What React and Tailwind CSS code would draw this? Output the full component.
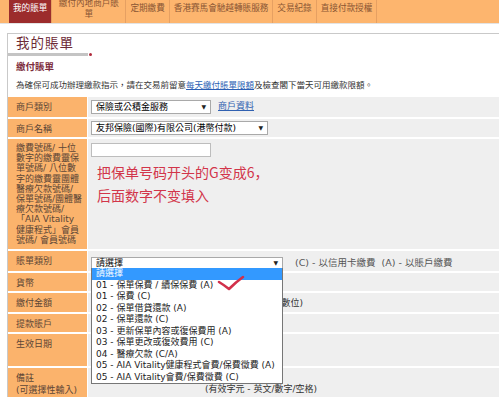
import React from 'react';

const TABS = [
  { label: '我的賬單', active: true },
  { label: '繳付內地商戶賬單', wrap: true },
  { label: '定期繳費' },
  { label: '香港賽馬會馳越轉賬服務' },
  { label: '交易紀錄' },
  { label: '直接付款授權' },
];

const BILL_TYPES = [
  '請選擇',
  '01 - 保單保費 / 續保保費 (A)',
  '01 - 保費 (C)',
  '02 - 保單借貸還款 (A)',
  '02 - 保單還款 (C)',
  '03 - 更新保單內容或復保費用 (A)',
  '03 - 保單更改或復效費用 (C)',
  '04 - 醫療欠款 (C/A)',
  '05 - AIA Vitality健康程式會費/保費徵費 (A)',
  '05 - AIA Vitality會費/保費徵費 (C)',
];

const LONG_LABEL = [
  '繳費號碼/ 十位',
  '數字的繳費靈保',
  '單號碼/ 八位數',
  '字的繳費靈團體',
  '醫療欠款號碼/',
  '保單號碼/團體醫',
  '療欠款號碼/',
  '「AIA Vitality',
  '健康程式」會員',
  '號碼/ 會員號碼',
];

const Select = ({ value, className }) => (
  <div className={`flex items-center justify-between bg-white border border-[#a9a9a9] pl-[4px] pr-[4px] leading-[12px] ${className}`}>
    <span className="whitespace-nowrap">{value}</span>
    <span className="text-[6px] text-[#222]">▼</span>
  </div>
);

// one row of the form: orange label on the left, grey field on the right
const Row = ({ label, h, children, labelClass = '' }) => (
  <>
    <div className={`bg-[#fbb36c] pl-[8px] pt-[4px] leading-[12px] text-[#5b4636] ${h} ${labelClass}`}>{label}</div>
    <div className={`bg-[#efefef] pl-[3px] ${h}`}>{children}</div>
  </>
);

export default function App() {
  return (
    <div className="relative w-[499px] h-[397px] overflow-hidden bg-white text-[9px] font-['DejaVu_Sans','Noto_Sans_CJK_TC',sans-serif]">
      {/* top tabs */}
      <nav className="flex h-[24px] bg-[#fdb56e] border-b border-[#e3e3e3] pl-[9px] text-[8.6px] leading-[11px] text-[#8a5634]">
        {TABS.map((t) => (
          <div
            key={t.label}
            className={
              t.active
                ? 'bg-[#9c2c2c] text-white px-[4px] pt-[3px] border-r border-[#e6a062]'
                : t.wrap
                ? 'w-[74px] text-center border-r border-[#e6a062]'
                : 'px-[4px] pt-[3px] border-r border-[#e6a062] whitespace-nowrap'
            }
          >
            {t.wrap ? (
              <div className="-mt-[2px] px-[3px]">
                繳付內地商戶賬
                <br />單
              </div>
            ) : (
              t.label
            )}
          </div>
        ))}
      </nav>

      <div className="ml-[7px] mt-[9px] border-t border-l border-[#c9c9c9]">
        <h1 className="pl-[8px] pt-[1px] text-[13.5px] leading-[18px] tracking-[1px] text-[#6d2b36] font-['Liberation_Serif','Noto_Sans_CJK_TC',serif]">
          我的賬單
        </h1>
        <div className="flex items-center">
          <div className="w-[80px] h-[3px] bg-[#c4c4c4]" />
          <div className="ml-[1px] w-[3px] h-[3px] rounded-full bg-[#b02a3c]" />
        </div>
        <h2 className="mt-[5px] pl-[8px] text-[9.5px] leading-[12px] font-bold text-[#7d2d3d]">繳付賬單</h2>
        <p className="mt-[6px] pl-[8px] text-[8.5px] leading-[12px] text-[#333] whitespace-nowrap">
          為確保可成功辦理繳款指示，請在交易前留意
          <span className="text-[#2b5fb4] underline">每天繳付賬單限額</span>
          及檢查閣下當天可用繳款限額。
        </p>

        {/* form */}
        <div className="mt-[6px] grid grid-cols-[79px_1fr] gap-y-[2px] gap-x-[1px]">
          <Row label="商戶類別" h="h-[20px]">
            <div className="flex items-center h-full">
              <Select value="保險或公積金服務" className="w-[120px] h-[14px]" />
              <span className="ml-[7px] text-[#3060b0] underline">商戶資料</span>
            </div>
          </Row>
          <Row label="商戶名稱" h="h-[18px]">
            <div className="flex items-center h-full">
              <Select value="友邦保險(國際)有限公司(港幣付款)" className="w-[177px] h-[14px]" />
            </div>
          </Row>
          <Row
            h="h-[110px]"
            labelClass="!leading-[10.2px] whitespace-nowrap"
            label={LONG_LABEL.map((l) => (
              <div key={l}>{l}</div>
            ))}
          >
            <div className="mt-[4px] w-[120px] h-[14px] bg-white border border-[#bdbdbd]" />
            <div className="mt-[4px] pl-[6px] text-[14px] leading-[23px] text-[#d2354a] font-['Noto_Sans_CJK_SC',sans-serif]">
              <div>把保单号码开头的G变成6，</div>
              <div>后面数字不变填入</div>
            </div>
          </Row>
          <Row label="賬單類別" h="h-[20px]">
            <div className="flex items-center pt-[5px]">
              <Select value="請選擇" className="w-[192px] h-[13px] border-[#7a7a7a]" />
              <span className="ml-[12px] text-[9.5px] text-[#555] whitespace-nowrap">
                (C) - 以信用卡繳費&nbsp;&nbsp;(A) - 以賬戶繳費
              </span>
            </div>
          </Row>
          <Row label="貨幣" h="h-[18px]" />
          <Row label="繳付金額" h="h-[19px]">
            <div className="w-[212px] pt-[4px] text-right text-[#333] whitespace-nowrap">(最多兩個小數位)</div>
          </Row>
          <Row label="提款賬戶" h="h-[18px]" />
          <Row label="生效日期" h="h-[32px]" />
          <Row
            h="h-[40px]"
            label={
              <>
                <div>備註</div>
                <div className="leading-[13px]">(可選擇性輸入)</div>
              </>
            }
          >
            <div className="pl-[114px] pt-[15px] text-[#333] whitespace-nowrap">(有效字元 - 英文/數字/空格)</div>
          </Row>
        </div>
      </div>

      {/* open dropdown list */}
      <div className="absolute left-[91px] top-[268px] w-[192px] bg-white border-x border-b border-[#767676] text-[#222]">
        {BILL_TYPES.map((b, i) => (
          <div
            key={b}
            className={`h-[11.5px] leading-[11.5px] pl-[4px] whitespace-nowrap ${i === 0 ? 'bg-[#3399ff] text-white' : ''}`}
          >
            {b}
          </div>
        ))}
      </div>

      {/* hand-drawn tick */}
      <svg className="absolute left-[215px] top-[273px]" width="32" height="22" viewBox="0 0 32 22">
        <path d="M4 9 Q9 12 14 16 Q21 9 28 4" fill="none" stroke="#d2304a" strokeWidth="2.6" strokeLinecap="round" strokeLinejoin="round" />
      </svg>
    </div>
  );
}
